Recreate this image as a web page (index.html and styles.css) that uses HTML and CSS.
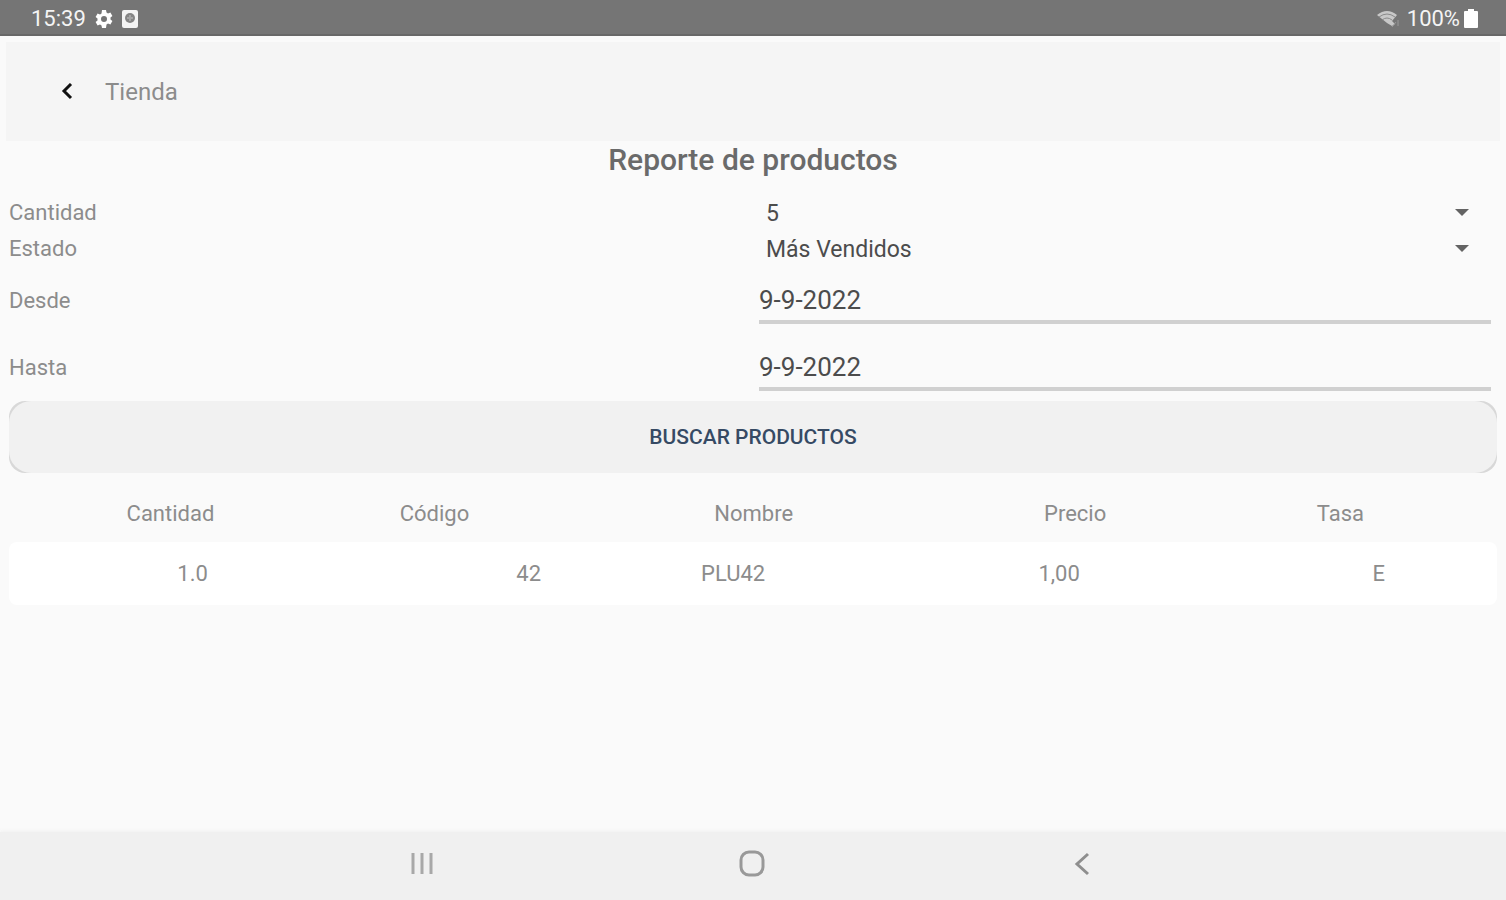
FILE: index.html
```
<!DOCTYPE html>
<html lang="es">
<head>
	<meta charset="UTF-8">
	<meta name="viewport" content="width=device-width, initial-scale=1">
	<title>Reporte de productos</title>
	<link rel="stylesheet" href="styles.css">
</head>
<body>
	<div class="status">
		<div class="status-left">
			<span>15:39</span>
			<svg width="20" height="20" viewBox="0 0 20 20">
				<path fill="#fff" fill-rule="evenodd" d="M8 1h4l.5 2.500 1.500.9 2.400-.9 2 3.400-1.900 1.600v1.900l1.900 1.700-2 3.400-2.400-.9-1.500.9L12 19H8l-.5-2.500-1.500-.9-2.400.9-2-3.400 1.900-1.700V9.500L1.600 7.900l2-3.400 2.400.9 1.500-.9zM10 7a3 3 0 1 0 0 6 3 3 0 0 0 0-6z"/>
			</svg>
			<svg width="16" height="20" viewBox="0 0 16 20">
				<rect x="0" y="1" width="16" height="18" rx="2" fill="#f4f4f4"/>
				<circle cx="8" cy="9" r="5" fill="#858585"/>
				<path d="M8 6v6M6 8v2M10 8v2" stroke="#c4c4c4"/>
			</svg>
		</div>
		<div class="status-right">
			<svg width="26" height="20" viewBox="0 0 26 20">
				<path d="M0 6Q10-2 20 6L15 12L18 15L15 17L10 14z" fill="#c8c8c8"/>
				<path d="M2 8Q10 2 18 8M5 11Q10 7 15 11" fill="none" stroke="#8a8a8a"/>
				<path d="M15 18l4-5M21 17v-6" stroke="#999"/>
			</svg>
			<span>100%</span>
			<svg width="14" height="20" viewBox="0 0 14 20">
				<path d="M4 0h6v2h3q1 0 1 1v15q0 1-1 1H1q-1 0-1-1V3q0-1 1-1h3z" fill="#fff"/>
			</svg>
		</div>
	</div>
	<header class="appbar">
		<button class="back" type="button" aria-label="Volver">
			<svg width="12" height="18" viewBox="0 0 12 18">
				<path d="M10 1L3 8l7 7" fill="none" stroke="#111" stroke-width="3"/>
			</svg>
		</button>
		<span>Tienda</span>
	</header>
	<main>
		<h1>Reporte de productos</h1>
		<form>
			<div class="field">
				<label for="cantidad">Cantidad</label>
				<div class="spinner">
					<select id="cantidad"><option>5</option></select>
					<svg width="14" height="8" viewBox="0 0 14 8"><path d="M0 0h14L7 7z" fill="#636363"/></svg>
				</div>
			</div>
			<div class="field">
				<label for="estado">Estado</label>
				<div class="spinner">
					<select id="estado"><option>Más Vendidos</option></select>
					<svg width="14" height="8" viewBox="0 0 14 8"><path d="M0 0h14L7 7z" fill="#636363"/></svg>
				</div>
			</div>
			<div class="field date">
				<label for="desde">Desde</label>
				<input id="desde" type="text" value="9-9-2022">
			</div>
			<div class="field date">
				<label for="hasta">Hasta</label>
				<input id="hasta" type="text" value="9-9-2022">
			</div>
			<button class="search" type="button"><span>BUSCAR PRODUCTOS</span></button>
		</form>
		<table>
			<thead>
				<tr>
					<th class="qty">Cantidad</th>
					<th class="code">Código</th>
					<th class="name">Nombre</th>
					<th class="price">Precio</th>
					<th class="tax">Tasa</th>
				</tr>
			</thead>
			<tbody>
				<tr>
					<td class="qty">1.0</td>
					<td class="code">42</td>
					<td class="name">PLU42</td>
					<td class="price">1,00</td>
					<td class="tax">E</td>
				</tr>
			</tbody>
		</table>
	</main>
	<nav>
		<button type="button" aria-label="Recientes">
			<svg width="28" height="28" viewBox="0 0 28 28">
				<path d="M4 3v21M13 3v21M22 3v21" stroke="#a8a8a8" stroke-width="3"/>
			</svg>
		</button>
		<button type="button" aria-label="Inicio">
			<svg width="28" height="28" viewBox="0 0 28 28">
				<rect x="2" y="2" width="22" height="23" rx="8" fill="none" stroke="#999" stroke-width="3"/>
			</svg>
		</button>
		<button type="button" aria-label="Atrás">
			<svg width="28" height="28" viewBox="0 0 28 28">
				<path d="M19 4L8 14l11 10" fill="none" stroke="#8e8e8e" stroke-width="3"/>
			</svg>
		</button>
	</nav>
</body>
</html>
```
FILE: styles.css
```
* {
	box-sizing: border-box;
}
body {
	display: flex;
	flex-direction: column;
	min-height: 100vh;
	margin: 0;
	background-color: #fafafa;
	color: #8c8c8c;
	font-family: Roboto, sans-serif;
	font-size: 22px;
	line-height: 28px;
}
button, select, input {
	margin: 0;
	padding: 0;
	border: none;
	background-color: transparent;
	font-family: inherit;
	font-size: inherit;
}
svg {
	display: block;
}
.status {
	display: flex;
	justify-content: space-between;
	align-items: center;
	height: 36px;
	padding: 4px 28px 0 31px;
	border-bottom: 2px solid #686868;
	background-color: #757575;
	color: #f4f4f4;
}
.status-left, .status-right {
	display: flex;
	align-items: center;
}
.status-left {
	gap: 8px;
}
.status-right {
	gap: 4px;
}
.appbar {
	display: flex;
	align-items: center;
	gap: 28px;
	height: 99px;
	margin: 6px 6px 0;
	padding-left: 51px;
	background-color: #f5f5f5;
	font-size: 24px;
}
.back {
	padding: 4px;
}
main {
	flex: 1;
	padding: 0 9px;
}
h1 {
	margin: 0 0 16px;
	color: #6a6a6a;
	font-size: 30px;
	font-weight: 500;
	line-height: 38px;
	text-align: center;
}
.field {
	display: grid;
	grid-template-columns: 1fr 1fr;
	align-items: center;
	height: 36px;
}
.date {
	height: 67px;
}
.spinner {
	display: grid;
	align-items: center;
}
.spinner select, .spinner svg {
	grid-area: 1 / 1;
}
.spinner svg {
	justify-self: end;
	margin-right: 28px;
	pointer-events: none;
}
select {
	height: 36px;
	padding-left: 13px;
	appearance: none;
	color: #4c4c4c;
	font-size: 23px;
}
input {
	height: 43px;
	margin: 3px 6px 0;
	border-bottom: 4px solid #d0d0d0;
	color: #4c4c4c;
	font-size: 26px;
}
.search {
	display: block;
	width: 100%;
	border-radius: 16px;
	background-color: #d8d8d8;
	color: #364a64;
	font-size: 21px;
	font-weight: 500;
}
/* rounder than the button, so only the corners are outlined */
.search span {
	display: block;
	border-radius: 22px;
	background-color: #f1f1f1;
	line-height: 72px;
}
table {
	width: 100%;
	margin-top: 13px;
	border-spacing: 0;
	table-layout: fixed;
}
th, td {
	padding: 0;
	text-align: center;
}
th {
	height: 56px;
	font-weight: 400;
}
td {
	height: 63px;
	background-color: #fff;
	text-align: right;
}
td:first-child {
	border-radius: 8px 0 0 8px;
}
td:last-child {
	border-radius: 0 8px 8px 0;
}
th.qty {
	width: 21.7%;
}
td.qty {
	padding-right: 124px;
}
th.code {
	width: 15.4%;
	padding-right: 24px;
}
td.code {
	padding-right: 20px;
}
th.name {
	width: 25.9%;
}
td.name {
	padding-left: 140px;
	text-align: left;
}
th.price {
	width: 17.3%;
}
td.price {
	padding-right: 124px;
}
th.tax {
	width: 19.7%;
	padding-right: 20px;
}
td.tax {
	padding-right: 112px;
}
nav {
	display: flex;
	justify-content: center;
	gap: 302px;
	padding: 18px 0 22px;
	background-color: #f0f0f0;
	box-shadow: 0 -1px 4px #f0f0f0;
}
```
